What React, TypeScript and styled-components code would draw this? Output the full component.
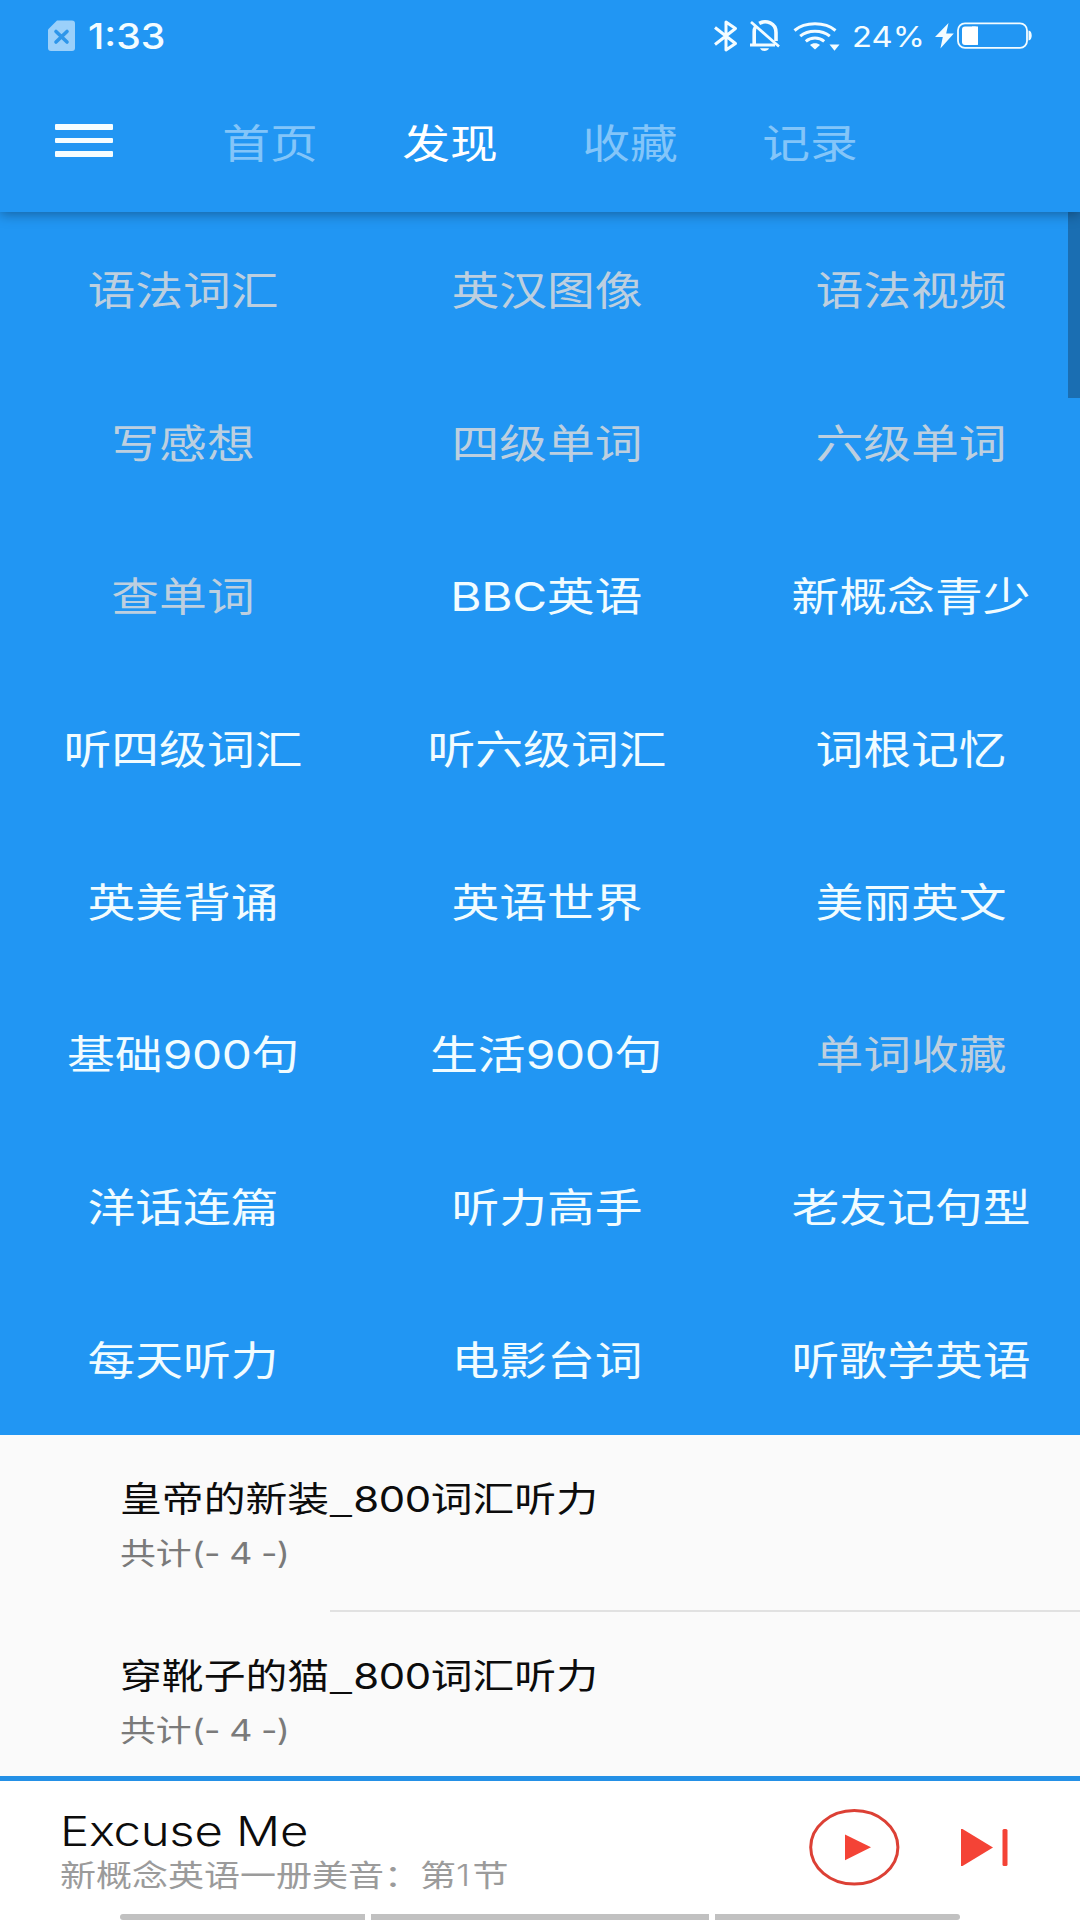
import React from "react";
import styled, { createGlobalStyle } from "styled-components";

const GlobalStyle = createGlobalStyle`
  *, *::before, *::after { box-sizing: border-box; }
  body { margin: 0; background: #fafafa; }
`;

const Screen = styled.div`
  width: 1080px;
  height: 1920px;
  overflow: hidden;
  display: flex;
  flex-direction: column;
  background: #fafafa;
  font-family: Inter, "Noto Sans CJK SC", sans-serif;
  font-weight: 400;
`;

const Header = styled.header`
  position: relative;
  z-index: 1;
  flex: none;
  height: 212px;
  display: flex;
  flex-direction: column;
  background: #2196f3;
  box-shadow: 0 2px 12px rgba(0, 0, 0, 0.36);
`;

const StatusBar = styled.div`
  height: 74px;
  display: flex;
  justify-content: space-between;
  padding: 0 48px 0 47px;
  color: #f3fcff;
`;

const StatusGroup = styled.div`
  display: flex;
  align-items: center;
  height: 72px;
`;

/* Glyphs are wider than tall throughout the interface. */
const Wide = styled.span<{ $x?: number; $origin?: string }>`
  display: inline-block;
  white-space: nowrap;
  transform: scaleX(${(p) => p.$x ?? 1.195});
  transform-origin: ${(p) => p.$origin ?? "center"} center;
`;

const LatinRun = styled.span<{ $spacing: number; $weight: number }>`
  font-weight: ${(p) => p.$weight};
  letter-spacing: ${(p) => p.$spacing}px;
`;

const Underscore = styled.span`
  font-family: "Noto Sans CJK SC", sans-serif;
  letter-spacing: 0.5px;
`;

const Clock = styled.div`
  width: 84px;
  margin-left: 12px;
  font-size: 35px;
  font-weight: 500;
  line-height: 73px;
`;

const Percent = styled.div`
  width: 83px;
  margin-left: 12px;
  font-size: 29px;
  line-height: 73px;
`;

const Icon = styled.svg<{ $ml?: number }>`
  display: block;
  flex: none;
  margin-left: ${(p) => p.$ml ?? 0}px;
`;

const Toolbar = styled.div`
  display: flex;
  height: 138px;
`;

const MenuButton = styled.div`
  width: 179.5px;
  padding: 50px 0 0 55px;
  display: flex;
  flex-direction: column;
  gap: 8px;
`;

const MenuBar = styled.div`
  width: 58px;
  height: 5.5px;
  border-radius: 1px;
  background: #f5fdff;
`;

const Tab = styled.div<{ $active?: boolean }>`
  width: 180.2px;
  text-align: center;
  font-size: 40px;
  line-height: 139px;
  color: ${(p) => (p.$active ? "#ffffff" : "#83c5f9")};
`;

const Body = styled.main`
  position: relative;
  flex: 1;
  min-height: 0;
  overflow: hidden;
`;

const Grid = styled.div`
  width: 1094px;
  height: 1222.5px;
  display: grid;
  grid-template-columns: 366px 361px 367px;
  grid-template-rows: repeat(8, 1fr);
  background: #2196f3;
`;

const Cell = styled.div<{ $muted?: boolean }>`
  display: flex;
  align-items: center;
  justify-content: center;
  padding-top: 6px;
  font-size: 40px;
  line-height: 60px;
  color: ${(p) => (p.$muted ? "#bdcfdf" : "#f1fcff")};
`;

const ScrollThumb = styled.div`
  position: absolute;
  top: 0;
  right: 0;
  width: 12px;
  height: 186px;
  background: #1a6eb2;
`;

const ListItem = styled.div`
  height: 177px;
  padding: 37px 0 0 120px;
`;

const ItemTitle = styled.div`
  height: 50px;
  font-size: 35px;
  line-height: 50px;
  color: #0c0c0c;
`;

const ItemNote = styled.div`
  margin-top: 9px;
  height: 44px;
  font-size: 30px;
  line-height: 44px;
  color: #7a7a7a;
`;

const Divider = styled.div`
  height: 2px;
  margin: -2px 0 0 330px;
  background: #e1e1e1;
`;

const Player = styled.footer`
  flex: none;
  height: 144px;
  border-top: 5px solid #2490e6;
  background: #fff;
  display: flex;
  flex-direction: column;
`;

const PlayerRow = styled.div`
  height: 132.5px;
  display: flex;
`;

const TrackInfo = styled.div`
  width: 809px;
  padding: 24px 0 0 60px;
`;

const TrackTitle = styled.div`
  height: 52px;
  font-size: 41px;
  line-height: 52px;
  color: #0c0c0c;
`;

const TrackNote = styled.div`
  height: 37px;
  font-size: 30px;
  line-height: 37px;
  color: #9b9b9b;
`;

const Controls = styled.div`
  display: flex;
  padding-top: 27px;
`;

const Progress = styled.div`
  display: flex;
  gap: 6px;
  margin-left: 120px;
`;

const Segment = styled.div<{ $w: number; $r?: string }>`
  width: ${(p) => p.$w}px;
  height: 6.5px;
  background: #c1c1c1;
  border-radius: ${(p) => p.$r ?? "0"};
`;

const tabs = ["首页", "发现", "收藏", "记录"];

const muted = new Set([
  "语法词汇", "英汉图像", "语法视频", "写感想",
  "四级单词", "六级单词", "查单词", "单词收藏",
]);

const topics = [
  "语法词汇", "英汉图像", "语法视频",
  "写感想", "四级单词", "六级单词",
  "查单词", "BBC英语", "新概念青少",
  "听四级词汇", "听六级词汇", "词根记忆",
  "英美背诵", "英语世界", "美丽英文",
  "基础900句", "生活900句", "单词收藏",
  "洋话连篇", "听力高手", "老友记句型",
  "每天听力", "电影台词", "听歌学英语",
];

const stories = ["皇帝的新装_800词汇听力", "穿靴子的猫_800词汇听力"];

type LabelProps = {
  text: string;
  x?: number;
  origin?: string;
  spacing?: number;
  weight?: number;
};

/* Sets Latin runs with their own weight and tracking beside the Chinese. */
function Label({ text, x, origin, spacing = 0, weight = 400 }: LabelProps) {
  const runs = text.split(/(_|[ -^`-~]+)/).filter(Boolean);
  return (
    <Wide $x={x} $origin={origin}>
      {runs.map((run, i) => {
        if (run === "_") return <Underscore key={i}>{run}</Underscore>;
        if (/^[ -~]/.test(run)) {
          return <LatinRun key={i} $spacing={spacing} $weight={weight}>{run}</LatinRun>;
        }
        return run;
      })}
    </Wide>
  );
}

function StatusIcons() {
  return (
    <>
      <Icon width="26" height="34" viewBox="0 0 26 34" fill="none" stroke="currentColor" strokeWidth="3">
        <path d="M2 8.5 L22.5 24.5 L13 31 V3 L22.5 9.5 L2 25.5" strokeLinejoin="round" />
      </Icon>
      <Icon $ml={10} width="32" height="34" viewBox="0 0 32 34" fill="none" stroke="currentColor">
        <path d="M2 3 L30 27.5" strokeWidth="2.7" />
        <path d="M5.2 26 V12.5 C5.2 10.5 5.7 9 6.6 7.6 M10.2 4.4 C17 .6 27 4 27 13.5 V22" strokeWidth="3.6" />
        <path d="M1 26 H26" strokeWidth="3" />
        <path d="M11 29.2 H20 C18.5 32.8 12.5 32.8 11 29.2Z" fill="currentColor" stroke="none" />
      </Icon>
      <Icon $ml={12} width="47" height="34" viewBox="0 0 47 34" fill="none" stroke="currentColor" strokeWidth="3">
        <path d="M1.5 11.5 C12 2.5 32 2.5 42.5 11.5" />
        <path d="M7.2 17.2 C15 10.5 29 10.5 36.8 17.2" />
        <path d="M12.8 22.4 C18 18 26 18 31.2 22.4" />
        <path d="M17 26 C19.5 23.6 24.5 23.6 27 26 L22 30.5Z" fill="currentColor" stroke="none" />
        <path d="M36.5 25.5 H46.5 L41.5 31.8Z" fill="currentColor" stroke="none" />
      </Icon>
    </>
  );
}

function Battery() {
  return (
    <>
      <Icon width="19" height="26" viewBox="0 0 19 26" fill="currentColor">
        <path d="M13.5 0 L0 14 H7.8 L5.4 25.5 L18.8 10.6 H11.2Z" />
      </Icon>
      <Icon $ml={3} width="75" height="28" viewBox="0 0 75 28" fill="none">
        <rect x="1" y="1.3" width="69" height="24.6" rx="7" stroke="currentColor" strokeWidth="1.8" />
        <rect x="5" y="4.5" width="16" height="18.4" rx="3" fill="#fff" />
        <rect x="15" y="4.5" width="6" height="18.4" fill="#fff" />
        <path d="M71.5 8.5 C75.8 8.5 75.8 18.5 71.5 18.5Z" fill="currentColor" />
      </Icon>
    </>
  );
}

export default function App() {
  return (
    <Screen>
      <GlobalStyle />
      <Header>
        <StatusBar>
          <StatusGroup>
            <Icon width="29" height="32" viewBox="0 0 29 32">
              <path d="M10 .6 H25 Q28 .6 28 3.6 V28 Q28 31 25 31 H4 Q1 31 1 28 V9.6Z" fill="#9bd0fa" />
              <path d="M9 11.5 L20 22 M20 11.5 L9 22" stroke="#2e96ea" strokeWidth="3.6" strokeLinecap="round" />
            </Icon>
            <Clock><Wide $x={1.12} $origin="left">1:33</Wide></Clock>
          </StatusGroup>
          <StatusGroup>
            <StatusIcons />
            <Percent><Wide $x={1.13} $origin="left">24%</Wide></Percent>
            <Battery />
          </StatusGroup>
        </StatusBar>
        <Toolbar>
          <MenuButton>
            <MenuBar />
            <MenuBar />
            <MenuBar />
          </MenuButton>
          {tabs.map((t, i) => (
            <Tab key={t} $active={i === 1}><Label text={t} /></Tab>
          ))}
        </Toolbar>
      </Header>
      <Body>
        <Grid>
          {topics.map((t) => (
            <Cell key={t} $muted={muted.has(t)}><Label text={t} spacing={-0.3} /></Cell>
          ))}
        </Grid>
        {stories.map((s, i) => (
          <React.Fragment key={s}>
            {i > 0 && <Divider />}
            <ListItem>
              <ItemTitle><Label text={s} origin="left" spacing={-0.3} /></ItemTitle>
              <ItemNote><Label text="共计(- 4 -)" origin="left" spacing={-0.6} /></ItemNote>
            </ListItem>
          </React.Fragment>
        ))}
        <ScrollThumb />
      </Body>
      <Player>
        <PlayerRow>
          <TrackInfo>
            <TrackTitle><Label text="Excuse Me" origin="left" spacing={-0.2} weight={300} /></TrackTitle>
            <TrackNote><Label text="新概念英语一册美音：第1节" x={1.2} origin="left" spacing={2} weight={300} /></TrackNote>
          </TrackInfo>
          <Controls>
            <Icon width="91" height="78" viewBox="0 0 91 78">
              <ellipse cx="45.3" cy="39.3" rx="43.6" ry="36.8" fill="none" stroke="#dc4035" strokeWidth="3" />
              <path d="M36 26.5 L62 39.3 L36 52.3Z" fill="#f44336" />
            </Icon>
            <Icon $ml={60} width="49" height="78" viewBox="0 0 49 78" fill="#f44336">
              <path d="M1 21 H2.5 L33 39.5 L2.5 58 H1Z" />
              <rect x="42.5" y="21" width="5" height="37" rx="1.5" />
            </Icon>
          </Controls>
        </PlayerRow>
        <Progress>
          <Segment $w={244.5} $r="4px 0 0 4px" />
          <Segment $w={338.5} />
          <Segment $w={245} $r="0 4px 4px 0" />
        </Progress>
      </Player>
    </Screen>
  );
}
